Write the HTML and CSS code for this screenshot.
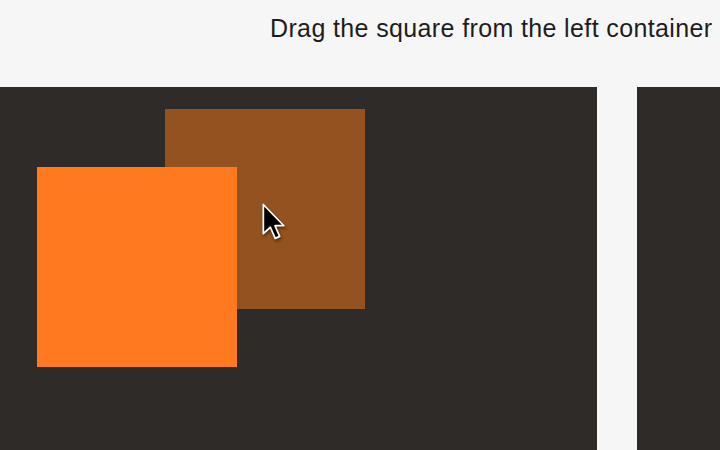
FILE: index.html
```html
<!DOCTYPE html>
<html>
<head>
<meta charset="utf-8">
<link rel="stylesheet" href="styles.css">
</head>
<body>
<div class="page">
  <header class="header">
    <p class="title">Drag the square from the left container</p>
  </header>
  <main class="containers">
    <section class="box box-left">
      <div class="square square-ghost"></div>
      <div class="square square-drag"></div>
      <svg class="cursor" width="28" height="40" viewBox="0 0 24 34">
        <path d="M2 2 L2 27 L8 21.5 L12.2 31 L16 29.3 L12 20.2 L19.6 20.2 Z" fill="#000" stroke="#fff" stroke-width="1.5" stroke-linejoin="round"/>
      </svg>
    </section>
    <section class="box box-right"></section>
  </main>
</div>
</body>
</html>
```
FILE: styles.css
```css
html, body {
  margin: 0;
  padding: 0;
  background: #f6f6f6;
  overflow: hidden;
  width: 720px;
  height: 450px;
}
.page {
  display: flex;
  flex-direction: column;
  height: 450px;
}
.header {
  height: 87px;
  flex: none;
}
.title {
  margin: 0;
  padding: 13px 0 0 270px;
  font-family: "Liberation Sans", Arial, sans-serif;
  font-size: 25px;
  line-height: 30px;
  letter-spacing: 0.37px;
  color: #1d1d1d;
  white-space: nowrap;
  overflow: hidden;
}
.containers {
  display: flex;
  gap: 40px;
  flex: 1;
}
.box {
  background: #2f2b28;
  position: relative;
}
.box-left {
  width: 597px;
  flex: none;
}
.box-right {
  flex: 1;
  min-width: 0;
}
.square {
  position: absolute;
  width: 200px;
  height: 200px;
}
.square-ghost {
  left: 165px;
  top: 22px;
  background: #93521f;
}
.square-drag {
  left: 37px;
  top: 80px;
  background: #ff7a1f;
}
.cursor {
  position: absolute;
  left: 261px;
  top: 115px;
  filter: drop-shadow(1px 2px 1.5px rgba(0,0,0,0.45));
}
```
